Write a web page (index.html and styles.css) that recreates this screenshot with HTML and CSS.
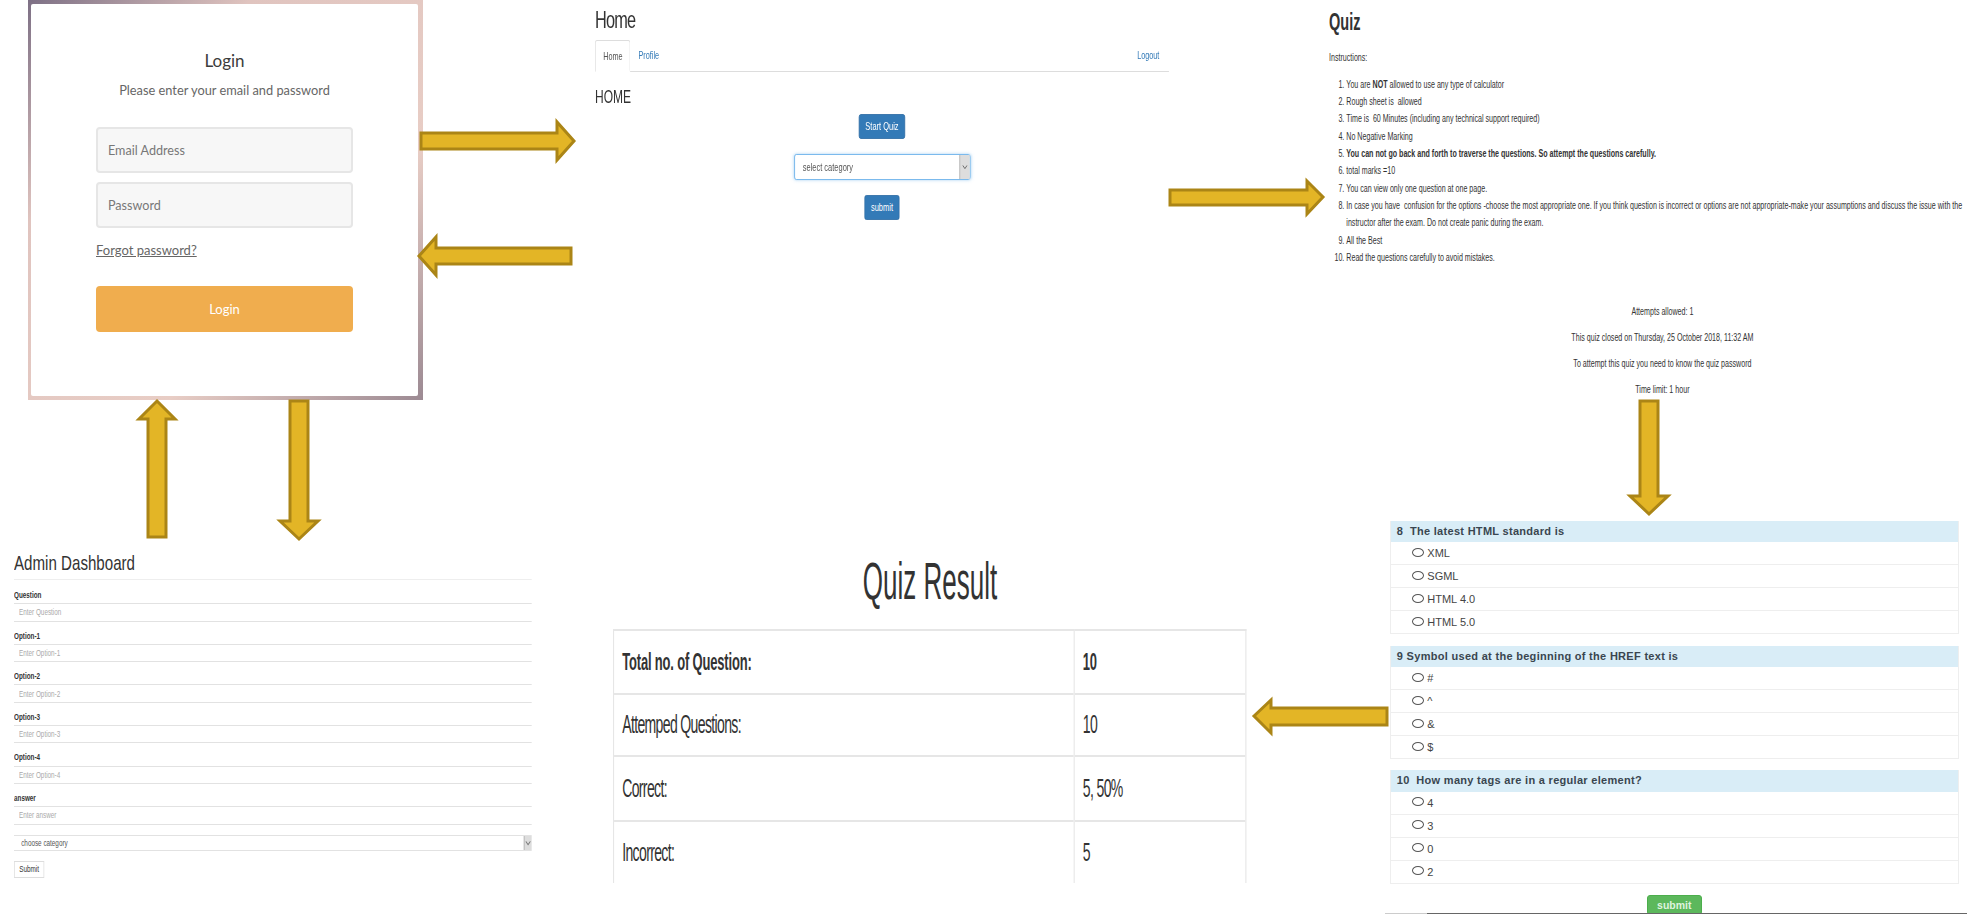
FILE: index.html
```html
<!DOCTYPE html>
<html lang="en">
<head>
  <meta charset="UTF-8" />
  <title>Quiz site flow</title>
  <link rel="stylesheet" href="styles.css">
</head>
<body>
  <main class="canvas">

    <section class="login">
      <form class="login-card">
        <h2>Login</h2>
        <p class="login-sub">Please enter your email and password</p>
        <input class="login-input" type="text" placeholder="Email Address">
        <input class="login-input second" type="password" placeholder="Password">
        <a class="forgot" href="#">Forgot password?</a>
        <button class="login-btn" type="button">Login</button>
      </form>
    </section>

    <section class="home">
      <h1>Home</h1>
      <nav class="tabs">
        <a class="tab active" href="#">Home</a>
        <a class="tab" href="#">Profile</a>
        <a class="tab logout" href="#">Logout</a>
      </nav>
      <h3>HOME</h3>
      <div class="home-actions">
        <button class="blue-btn start" type="button">Start Quiz</button>
        <div class="fake-select home-select">
          <span>select category</span>
          <span class="select-arrow"><svg viewBox="0 0 10 6" width="8" height="6"><polyline points="1,1 5,5 9,1" fill="none" stroke="#555" stroke-width="1.2"/></svg></span>
        </div>
        <button class="blue-btn submit" type="button">submit</button>
      </div>
    </section>

    <section class="quiz">
      <h2>Quiz</h2>
      <p class="instructions">Instructions:</p>
      <ol>
        <li>You are <strong>NOT</strong> allowed to use any type of calculator</li>
        <li>Rough sheet is&nbsp; allowed</li>
        <li>Time is&nbsp; 60 Minutes (including any technical support required)</li>
        <li>No Negative Marking</li>
        <li><strong>You can not go back and forth to traverse the questions. So attempt the questions carefully.</strong></li>
        <li>total marks =10</li>
        <li>You can view only one question at one page.</li>
        <li>In case you have&nbsp; confusion for the options -choose the most appropriate one. If you think question is incorrect or options are not appropriate-make your assumptions and discuss the issue with the<br>instructor after the exam. Do not create panic during the exam.</li>
        <li>All the Best</li>
        <li>Read the questions carefully to avoid mistakes.</li>
      </ol>
      <div class="quiz-info">
        <p>Attempts allowed: 1</p>
        <p>This quiz closed on Thursday, 25 October 2018, 11:32 AM</p>
        <p>To attempt this quiz you need to know the quiz password</p>
        <p>Time limit: 1 hour</p>
      </div>
    </section>

    <section class="questions">
      <div class="question">
        <div class="q-head">8&nbsp; The latest HTML standard is</div>
        <label class="q-row"><input type="radio" name="q8">XML</label>
        <label class="q-row"><input type="radio" name="q8">SGML</label>
        <label class="q-row"><input type="radio" name="q8">HTML 4.0</label>
        <label class="q-row"><input type="radio" name="q8">HTML 5.0</label>
      </div>
      <div class="question">
        <div class="q-head">9 Symbol used at the beginning of the HREF text is</div>
        <label class="q-row"><input type="radio" name="q9">#</label>
        <label class="q-row"><input type="radio" name="q9">^</label>
        <label class="q-row"><input type="radio" name="q9">&amp;</label>
        <label class="q-row"><input type="radio" name="q9">$</label>
      </div>
      <div class="question">
        <div class="q-head">10&nbsp; How many tags are in a regular element?</div>
        <label class="q-row"><input type="radio" name="q10">4</label>
        <label class="q-row"><input type="radio" name="q10">3</label>
        <label class="q-row"><input type="radio" name="q10">0</label>
        <label class="q-row"><input type="radio" name="q10">2</label>
      </div>
      <button class="green-btn" type="button">submit</button>
    </section>
    <div class="bottom-line"></div>

    <h1 class="result-title">Quiz Result</h1>
    <table class="result">
      <tr class="r1"><th>Total no. of Question:</th><th>10</th></tr>
      <tr class="r2"><td>Attemped Questions:</td><td>10</td></tr>
      <tr class="r3"><td>Correct:</td><td>5, 50%</td></tr>
      <tr class="r4"><td>Incorrect:</td><td>5</td></tr>
    </table>

    <section class="admin">
      <h2>Admin Dashboard</h2>
      <div class="field"><label>Question</label><input type="text" placeholder="Enter Question"></div>
      <div class="field"><label>Option-1</label><input type="text" placeholder="Enter Option-1"></div>
      <div class="field"><label>Option-2</label><input type="text" placeholder="Enter Option-2"></div>
      <div class="field"><label>Option-3</label><input type="text" placeholder="Enter Option-3"></div>
      <div class="field"><label>Option-4</label><input type="text" placeholder="Enter Option-4"></div>
      <div class="field"><label>answer</label><input type="text" placeholder="Enter answer"></div>
      <div class="fake-select admin-select">
        <span>choose category</span>
        <span class="select-arrow"><svg viewBox="0 0 10 6" width="8" height="6"><polyline points="1,1 5,5 9,1" fill="none" stroke="#777" stroke-width="1.4"/></svg></span>
      </div>
      <button class="admin-btn" type="button">Submit</button>
    </section>

    <!-- flow arrows between the screens -->
    <svg class="arrows" width="1967" height="914" viewBox="0 0 1967 914">
      <g fill="#e3b526" stroke="#ab8516" stroke-width="3">
        <polygon points="421,133 557,133 557,122 574,141 557,160 557,149 421,149"/>
        <polygon points="419,256 436,237 436,248 571,248 571,264 436,264 436,275"/>
        <polygon points="1170,190 1307,190 1307,181 1323,197 1307,214 1307,205 1170,205"/>
        <polygon points="1640,401 1658,401 1658,496 1668,496 1649,514 1630,496 1640,496"/>
        <polygon points="1254,716 1271,700 1271,708 1387,708 1387,725 1271,725 1271,733"/>
        <polygon points="157,401 175,419 166,419 166,537 148,537 148,419 139,419"/>
        <polygon points="290,401 308,401 308,521 318,521 299,539 280,521 290,521"/>
      </g>
    </svg>
  </main>
</body>
</html>
```

FILE: styles.css
```css
* {
  box-sizing: border-box;
}

html, body {
  margin: 0;
  padding: 0;
  background: #fff;
  overflow: hidden;
}

body {
  font-family: "Liberation Sans", Arial, sans-serif;
  color: #333;
}

.canvas {
  position: relative;
  width: 1967px;
  height: 914px;
  overflow: hidden;
}

h1, h2, h3, p, ol {
  margin: 0;
  font-weight: normal;
}

button {
  font-family: inherit;
  cursor: pointer;
}

/* login */
.login {
  position: absolute;
  left: 28px;
  top: 0;
  width: 395px;
  height: 400px;
  padding: 4px 5px 4px 3px;
  background: linear-gradient(135deg, #7d7085 0%, #e0c4bf 28%, #e8cdc5 68%, #9c8a93 100%);
  font-family: Lato, sans-serif;
}

.login-card {
  display: flex;
  flex-direction: column;
  align-items: center;
  height: 100%;
  padding-top: 47px;
  background: #fff;
  border-radius: 2px;
}

.login-card h2 {
  font-size: 17px;
  line-height: 20px;
  color: #3c3c3c;
}

.login-sub {
  margin-top: 10px;
  margin-bottom: 28px;
  font-size: 12.8px;
  line-height: 18px;
  color: #666;
}

.login-input {
  width: 257px;
  height: 46px;
  padding: 0 10px;
  background: #f7f7f7;
  border: 2px solid #e6e6e6;
  border-radius: 4px;
  font-family: inherit;
  font-size: 12.6px;
}

.login-input::placeholder {
  color: #777;
  opacity: 1;
}

.login-input.second {
  margin-top: 9px;
}

.forgot {
  align-self: flex-start;
  margin-top: 13px;
  margin-left: 65px;
  font-size: 13px;
  line-height: 18px;
  color: #666;
}

.login-btn {
  width: 257px;
  height: 46px;
  margin-top: 27px;
  background: #f0ad4e;
  border: none;
  border-radius: 4px;
  color: #fff;
  font-family: inherit;
  font-size: 13px;
}

/* home */
.home {
  position: absolute;
  left: 594.5px;
  top: 0;
  width: 844px;
  padding-top: 7px;
  transform: scaleX(.68);
  transform-origin: 0 0;
}

.home h1 {
  font-size: 24px;
  line-height: 26px;
  letter-spacing: -1.2px;
}

.tabs {
  display: flex;
  height: 32px;
  margin-top: 7px;
  border-bottom: 1px solid #ddd;
  font-size: 10.7px;
}

.tab {
  height: 32px;
  padding: 0 12px;
  line-height: 31px;
  color: #337ab7;
  text-decoration: none;
}

.tab.active {
  width: 52px;
  color: #555;
  background: #fff;
  border: 1px solid #ddd;
  border-bottom-color: #fff;
  border-radius: 3px 3px 0 0;
  padding: 0 11px;
}

.tab.logout {
  margin-left: auto;
  padding-right: 14px;
}

.home h3 {
  margin-top: 14.5px;
  font-size: 17.7px;
  line-height: 20px;
}

.home-actions {
  display: flex;
  flex-direction: column;
  align-items: center;
  gap: 15px;
  margin-top: 7px;
}

.blue-btn {
  height: 25px;
  padding: 0;
  background: #337ab7;
  border: 1px solid #2e6da4;
  border-radius: 3px;
  color: #fff;
  font-size: 11px;
}

.blue-btn.start {
  width: 68px;
}

.blue-btn.submit {
  width: 52px;
}

.fake-select {
  display: flex;
  align-items: center;
  justify-content: space-between;
  background: #fff;
  color: #555;
}

.home-select {
  width: 259px;
  height: 26px;
  padding-left: 12px;
  border: 1px solid #66afe9;
  border-radius: 3px;
  box-shadow: 0 0 4px rgba(102, 175, 233, .6);
  font-size: 11px;
}

.select-arrow {
  display: flex;
  align-items: center;
  justify-content: center;
  align-self: stretch;
  background: #ddd;
  border-left: 1px solid #aaa;
}

.home-select .select-arrow {
  width: 15px;
}

/* quiz instructions */
.quiz {
  position: absolute;
  left: 1329px;
  top: 0;
  width: 1079px;
  padding-top: 8.5px;
  transform: scaleX(.618);
  transform-origin: 0 0;
  font-size: 11.5px;
  line-height: 17.33px;
  color: #333;
}

.quiz h2 {
  font-size: 23.5px;
  line-height: 26px;
  font-weight: bold;
}

.instructions {
  margin-top: 14.5px;
}

.quiz ol {
  margin-top: 9.3px;
  padding-left: 28px;
  white-space: nowrap;
}

.quiz-info {
  margin-top: 37px;
  text-align: center;
}

.quiz-info p {
  margin-bottom: 8.7px;
}

/* questions */
.questions {
  position: absolute;
  left: 1389.8px;
  top: 521px;
  width: 569px;
  display: flex;
  flex-direction: column;
  font-size: 11px;
  color: #444;
}

.question {
  margin-bottom: 11.3px;
  border-left: 1px solid #eee;
  border-right: 1px solid #eee;
}

.q-head {
  height: 21.4px;
  padding-left: 6px;
  background: #d9edf7;
  font-weight: bold;
  line-height: 21px;
  letter-spacing: .3px;
  color: #3a4650;
}

.q-row {
  display: flex;
  align-items: center;
  gap: 3.5px;
  height: 23px;
  padding-left: 21px;
  border-bottom: 1.5px solid #eee;
}

.q-row input {
  appearance: none;
  width: 12px;
  height: 9px;
  margin: 0 0 2px;
  background: #fff;
  border: 1px solid #555;
  border-radius: 50%;
}

.green-btn {
  align-self: center;
  width: 55px;
  height: 20px;
  margin-top: -.5px;
  padding: 0;
  background: #5cb85c;
  border: 1px solid #4cae4c;
  border-radius: 3px;
  color: #dff3df;
  font-size: 10.5px;
  font-weight: bold;
}

.bottom-line {
  position: absolute;
  left: 1385px;
  top: 913px;
  width: 582px;
  height: 1px;
  background: linear-gradient(90deg, #ccc 0, #ccc 42px, #666 42px);
}

/* result */
.result-title {
  position: absolute;
  left: 613px;
  top: 552px;
  width: 634px;
  font-size: 51px;
  line-height: 60px;
  text-align: center;
  color: #333;
  transform: scaleX(.51);
}

.result {
  position: absolute;
  left: 613.4px;
  top: 629.3px;
  width: 1173px;
  table-layout: fixed;
  border-collapse: collapse;
  transform: scaleX(.54);
  transform-origin: 0 0;
  font-size: 26px;
  color: #333;
}

.result th, .result td {
  padding: 0 14px 0 15px;
  text-align: left;
  border: 2px solid #e6e6e6;
  border-bottom: none;
}

.result td {
  letter-spacing: -1.2px;
}

.result th {
  font-size: 24px;
  letter-spacing: -.3px;
}

.result th:first-child, .result td:first-child {
  width: 853px;
}

.r1 { height: 63.4px; }
.r2 { height: 62.6px; }
.r3 { height: 65px; }
.r4 { height: 61.4px; }

/* admin */
.admin {
  position: absolute;
  left: 14px;
  top: 551px;
  width: 719px;
  transform: scaleX(.72);
  transform-origin: 0 0;
}

.admin h2 {
  height: 29px;
  margin-bottom: 9px;
  border-bottom: 1px solid #eee;
  font-size: 21px;
  line-height: 24px;
}

.field {
  margin-bottom: 7.9px;
}

.field label {
  display: block;
  height: 14.3px;
  font-size: 8.8px;
  font-weight: bold;
  line-height: 12px;
}

.field input {
  display: block;
  width: 100%;
  height: 18.4px;
  padding: 0 7px;
  border: none;
  border-top: 1.5px solid #e2e2e2;
  border-bottom: 1.5px solid #e2e2e2;
  background: #fff;
  font-family: inherit;
  font-size: 8.8px;
}

.field input::placeholder {
  color: #aaa;
  opacity: 1;
}

.admin-select {
  width: 100%;
  height: 16.6px;
  margin-top: 10px;
  padding-left: 10px;
  border-top: 1.5px solid #e2e2e2;
  border-bottom: 1.5px solid #e2e2e2;
  font-size: 8.8px;
}

.admin-select .select-arrow {
  width: 11px;
}

.admin-btn {
  display: block;
  width: 42px;
  height: 17px;
  margin-top: 9.7px;
  padding: 0;
  background: #fff;
  border: 1px solid #ddd;
  color: #333;
  font-size: 8.8px;
}

/* arrows sit over the screens */
.arrows {
  position: absolute;
  left: 0;
  top: 0;
  pointer-events: none;
}
```
